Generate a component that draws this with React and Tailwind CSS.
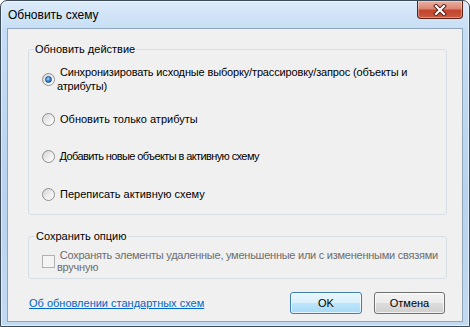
import React from 'react';

const font = { fontFamily: '"Liberation Sans", Arial, sans-serif' };

function Radio({ checked }) {
    return (
        <span className="flex h-[13px] w-[13px] shrink-0 items-center justify-center rounded-full border border-[#8e8f8f] bg-[linear-gradient(135deg,#d4d4d4,#f6f6f6_70%,#ffffff)]">
            {checked && (
                <span className="h-[7px] w-[7px] rounded-full border border-[#1d4f8a] bg-[radial-gradient(circle_at_40%_35%,#a6dcff,#2f7fd0_55%,#124a8c)]" />
            )}
        </span>
    );
}

function RadioRow({ checked, children, className, textClass = '' }) {
    return (
        <div className={"flex items-center " + className}>
            <Radio checked={checked} />
            <span className={"ml-[2px] whitespace-nowrap text-[11px] leading-[14px] text-black " + textClass}>{children}</span>
        </div>
    );
}

export default function App() {
    return (
        <div
            style={font}
            className="flex h-[327px] w-[470px] flex-col overflow-hidden rounded-t-[7px] border border-[#3d4a58] bg-[linear-gradient(180deg,#dcebf9_0%,#c5ddf4_30px,#b9d3ee_60%,#c2daf1_100%)] shadow-[inset_0_0_0_1px_rgba(255,255,255,0.55)]"
        >
            <div className="flex h-[27px] shrink-0 items-start justify-between pl-[7px] pr-[6px]">
                <span className="mt-[7px] text-[12px] leading-[15px] text-black">Обновить схему</span>
                <button className="flex h-[18px] w-[46px] items-center justify-center rounded-b-[4px] border border-t-0 border-[#5a2318] bg-[linear-gradient(180deg,#eab0a2_0%,#dc8774_45%,#c4452d_55%,#c95a40_100%)] shadow-[inset_0_0_0_1px_rgba(255,255,255,0.35)]">
                    <svg width="14" height="12" viewBox="0 0 14 12">
                        <path d="M3 2 L11 10 M11 2 L3 10" stroke="#4a1a12" strokeWidth="4" strokeLinecap="square" />
                        <path d="M3 2 L11 10 M11 2 L3 10" stroke="#ffffff" strokeWidth="2.2" strokeLinecap="square" />
                    </svg>
                </button>
            </div>

            <div className="mx-[6px] mb-[4px] flex flex-1 flex-col border border-[#8fa5bd] bg-[#f0f0f0]">
                <fieldset className="ml-[20px] mr-[15px] mt-[13px] h-[173px] rounded-[3px] border border-[#d5dfe5]">
                    <legend className="ml-[5px] px-[1px] text-[11px] leading-[15px] text-black">Обновить действие</legend>
                    <RadioRow checked className="ml-[13px] mt-[8px]" textClass="tracking-[-0.15px]">
                        {'\u00a0'}Синхронизировать исходные выборку/трассировку/запрос (объекты и
                        <br />
                        атрибуты)
                    </RadioRow>
                    <RadioRow className="ml-[13px] mt-[19px]">{'\u00a0'}Обновить только атрибуты</RadioRow>
                    <RadioRow className="ml-[13px] mt-[23px]" textClass="tracking-[-0.6px]">{'\u00a0'}Добавить новые объекты в активную схему</RadioRow>
                    <RadioRow className="ml-[13px] mt-[24px]">{'\u00a0'}Переписать активную схему</RadioRow>
                </fieldset>

                <fieldset className="ml-[20px] mr-[15px] mt-[14px] h-[50px] rounded-[3px] border border-[#d5dfe5]">
                    <legend className="ml-[6px] px-[1px] text-[11px] leading-[15px] text-black">Сохранить опцию</legend>
                    <div className="ml-[13px] mt-[5px] flex items-center">
                        <span className="h-[13px] w-[13px] shrink-0 border border-[#b1b1b1] bg-[#f4f4f4]" />
                        <span className="ml-[2px] whitespace-nowrap text-[11px] leading-[12px] tracking-[-0.25px] text-[#6d6d6d]">
                            {'\u00a0'}Сохранять элементы удаленные, уменьшенные или с измененными связями
                            <br />
                            вручную
                        </span>
                    </div>
                </fieldset>

                <div className="mt-[13px] flex items-center justify-between pl-[21px] pr-[17px]">
                    <a href="#" className="text-[11px] leading-[15px] text-[#0066cc] underline">Об обновлении стандартных схем</a>
                    <div className="flex gap-[12px]">
                        <button className="h-[22px] w-[72px] rounded-[3px] border border-[#3c7fb1] bg-[linear-gradient(180deg,#eaf6fd_0%,#d9f0fc_50%,#bee6fd_50%,#a7d9f5_100%)] text-[11px] text-black shadow-[inset_0_0_0_1px_rgba(255,255,255,0.7)]">
                            OK
                        </button>
                        <button className="h-[22px] w-[71px] rounded-[3px] border border-[#707070] bg-[linear-gradient(180deg,#f2f2f2_0%,#ebebeb_50%,#dddddd_50%,#cfcfcf_100%)] text-[11px] text-black shadow-[inset_0_0_0_1px_rgba(255,255,255,0.7)]">
                            Отмена
                        </button>
                    </div>
                </div>
            </div>
        </div>
    );
}
